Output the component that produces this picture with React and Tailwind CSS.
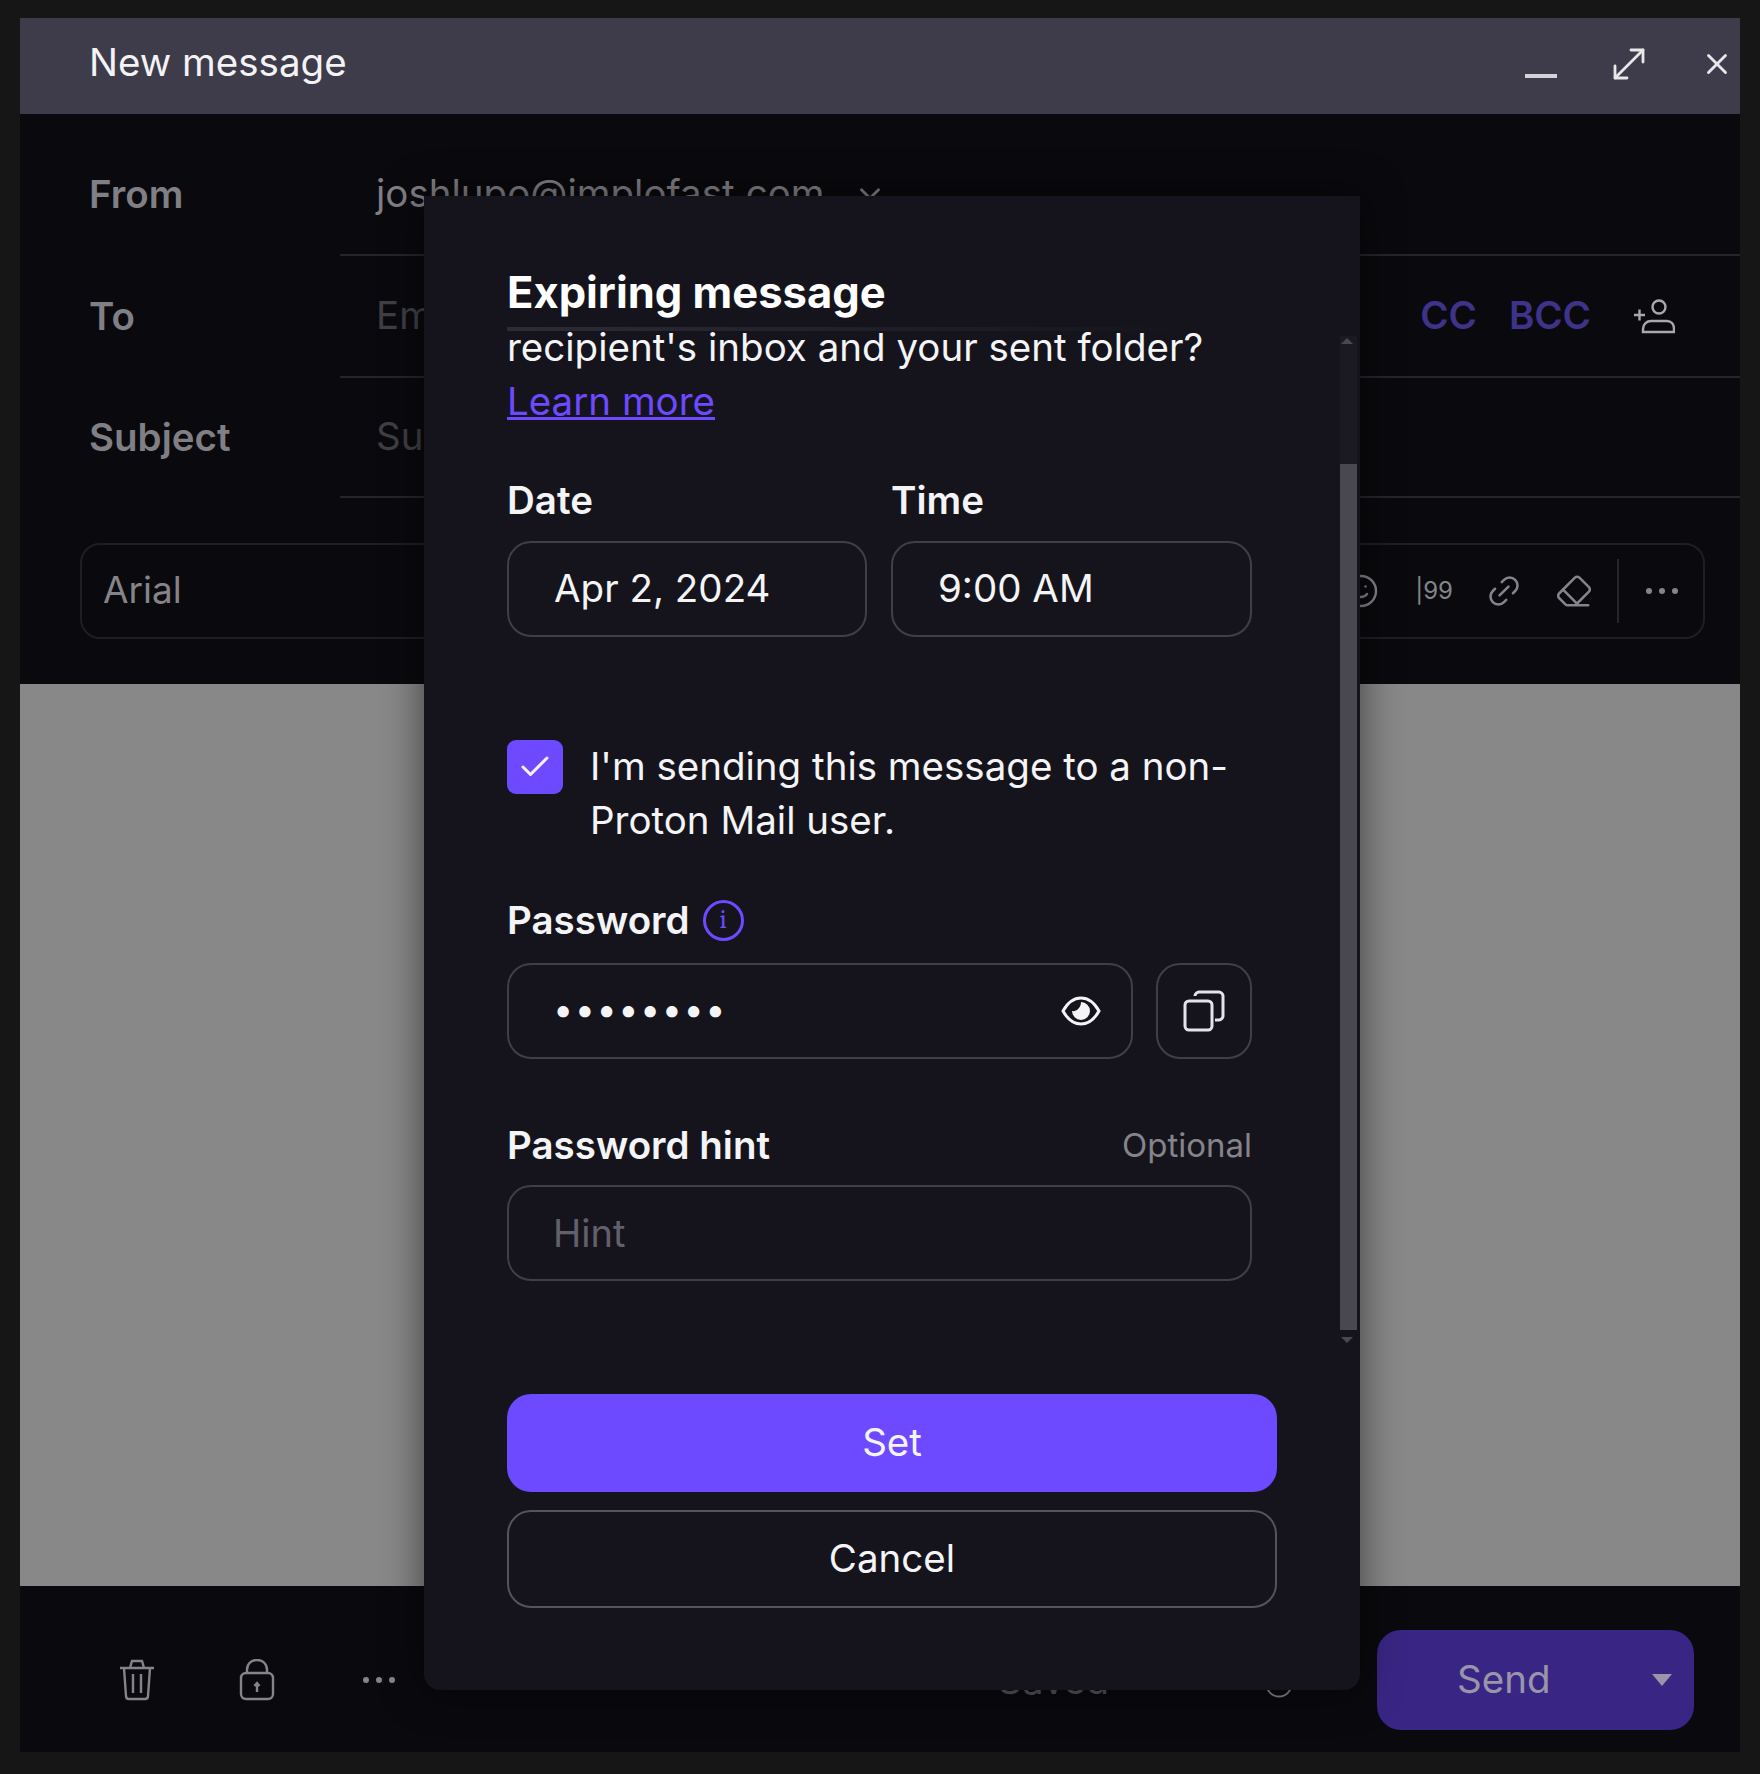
import React from 'react';
import { Check, X, MoveDiagonal, Smile, Link2, Eraser, ChevronDown, Clock } from 'lucide-react';

const inter = { fontFamily: 'Inter, sans-serif' };

function AddUser() {
    return (
        <svg width="42" height="35" viewBox="0 0 42 35" fill="none" stroke="#a9a8ad" strokeWidth="2.4">
            <circle cx="26" cy="8" r="6.500" />
            <path d="M10 33v-3c0-5 4-8 8-8h16c4 0 7 3 7 8v3z" />
            <path d="M1 16h11M6.500 10.500v11" />
        </svg>
    );
}

function Lock() {
    return (
        <svg width="36" height="42" viewBox="0 0 36 42" fill="none" stroke="#85848a" strokeWidth="2.400">
            <rect x="2" y="14" width="32" height="26" rx="5" />
            <path d="M8 14V11c0-6 4-10 10-10s10 4 10 10v3" />
            <path d="M18 33v-9M15.500 27l2.500-3 2.500 3" />
        </svg>
    );
}

function Trash() {
    return (
        <svg width="36" height="42" viewBox="0 0 36 42" fill="none" stroke="#85848a" strokeWidth="2.400">
            <path d="M1 9h34M11 9l2-7h10l2 7" />
            <path d="M5 9l2 28c0 2 1 3 3 3h16c2 0 3-1 3-3l2-28" />
            <path d="M14 15v19M22 15v19" />
        </svg>
    );
}

function Dots() {
    return (
        <svg width="34" height="8" viewBox="0 0 34 8" fill="currentColor">
            <circle cx="4" cy="4" r="3" />
            <circle cx="17" cy="4" r="3" />
            <circle cx="30" cy="4" r="3" />
        </svg>
    );
}

function EyeIcon() {
    return (
        <svg width="40" height="32" viewBox="0 0 40 32" fill="none" stroke="#f4f4f6" strokeWidth="3">
            <path d="M2 16C7 7 13 3 20 3s13 4 18 13c-5 9-11 13-18 13S7 25 2 16z" />
            <path d="M20 7a9 9 0 1 1-9 9c4 1 9-3 9-9z" fill="#f4f4f6" stroke="none" />
        </svg>
    );
}

function CopyIcon() {
    return (
        <svg width="42" height="42" viewBox="0 0 42 42" fill="none" stroke="#e4e4e8" strokeWidth="3">
            <rect x="2" y="11" width="27" height="29" rx="4" />
            <path d="M12 6c0-2 2-4 4-4h20c2 0 4 2 4 4v20c0 2-2 4-4 4h-4" />
        </svg>
    );
}

function FieldRow({ label, children, right, height = 'h-[122px]' }) {
    return (
        <div className={`flex items-center ${height}`}>
            <div className="w-[320px] pl-[69px] text-[38.5px] font-semibold text-[#807f85]">{label}</div>
            <div className="flex h-full flex-1 items-center justify-between border-b-2 border-[#26252c] pl-[36px] pr-[65px]">
                {children}
                {right}
            </div>
        </div>
    );
}

function Box({ className = '', children }) {
    return (
        <div className={`flex h-[96px] items-center rounded-[24px] border-2 border-[#403f49] ${className}`}>
            {children}
        </div>
    );
}

export default function App() {
    return (
        <div className="h-[1774px] w-[1760px] overflow-hidden bg-[#161616] px-[20px] pt-[18px]" style={inter}>
            <div className="relative flex h-[1734px] flex-col bg-[#0a0a0e]">
                {/* header */}
                <div className="flex h-[96px] items-center justify-between bg-[#3e3b4b] pl-[69px] pr-[6px] text-white">
                    <span className="-mt-[6px] text-[38.5px] text-[#f3f3f5]">New message</span>
                    <div className="-mt-[4px] flex items-center">
                        <div className="mt-[24px] h-[4px] w-[32px] bg-[#d4d3d8]" />
                        <MoveDiagonal size={48} strokeWidth={1.4} className="ml-[48px] text-[#e8e8ea]" />
                        <X size={34} strokeWidth={2} className="ml-[47px] text-[#e8e8ea]" />
                    </div>
                </div>

                {/* fields */}
                <div className="pt-[20px]">
                    <FieldRow label="From">
                        <div className="flex items-center text-[38.5px] text-[#807f85]">
                            joshlupo@implofast.com
                            <ChevronDown size={34} className="ml-[28px]" />
                        </div>
                    </FieldRow>
                    <FieldRow
                        label="To"
                        right={
                            <div className="flex items-center text-[38.5px] font-semibold text-[#3f3289]">
                                <span>CC</span>
                                <span className="ml-[32px]">BCC</span>
                                <span className="ml-[42px]"><AddUser /></span>
                            </div>
                        }
                    >
                        <span className="text-[38.5px] text-[#403f45]">Email address</span>
                    </FieldRow>
                    <FieldRow label="Subject" height="h-[120px]">
                        <span className="text-[38.5px] text-[#403f45]">Subject</span>
                    </FieldRow>
                </div>

                {/* toolbar */}
                <div className="ml-[60px] mr-[35px] mt-[45px] flex h-[96px] items-center justify-between rounded-[20px] border-2 border-[#1f1e25] pl-[21px] pr-[24px] text-[#85848a]">
                    <span className="-mt-[3px] text-[37px]">Arial</span>
                    <div className="flex items-center">
                        <Smile size={36} strokeWidth={1.6} />
                        <span className="ml-[36px] text-[24px]">|99</span>
                        <Link2 size={38} strokeWidth={1.6} className="ml-[32px] -rotate-45" />
                        <Eraser size={38} strokeWidth={1.6} className="ml-[32px]" />
                        <div className="ml-[24px] mr-[26px] h-[64px] w-[2px] bg-[#26252c]" />
                        <Dots />
                    </div>
                </div>

                {/* body */}
                <div className="mt-[45px] flex-1 bg-[#888888]" />

                {/* footer */}
                <div className="flex h-[166px] items-center justify-between pl-[99px] pr-[46px] pt-[22px] text-[#85848a]">
                    <div className="flex items-center">
                        <Trash />
                        <span className="ml-[84px]"><Lock /></span>
                        <span className="ml-[87px]"><Dots /></span>
                    </div>
                    <div className="flex items-center">
                        <span className="mr-[155px] text-[38px] text-[#55545c]">Saved</span>
                        <Clock size={30} strokeWidth={1.6} className="mr-[83px] mt-[8px]" />
                        <div className="flex h-[100px] w-[317px] items-center justify-between rounded-[24px] bg-[#392684] pl-[80px] pr-[22px] text-[38.5px] text-[#9a95a8]">
                            Send
                            <div className="h-0 w-0 border-x-[10px] border-t-[12px] border-x-transparent border-t-[#9a95a8]" />
                        </div>
                    </div>
                </div>

                {/* expiring message dialog */}
                <div className="absolute left-[404px] top-[178px] h-[1494px] w-[936px] rounded-b-[16px] bg-[#15141d] pl-[83px] pt-[68px] text-[#f4f4f6] shadow-[0_0_40px_rgba(0,0,0,0.55)]">
                    {/* shadow line under the sticky title */}
                    <div className="absolute left-[83px] top-[131px] h-[4px] w-[683px] bg-gradient-to-r from-[#2d2c36] to-transparent" />

                    <h1 className="relative text-[43.5px] font-bold leading-[56px] text-white">Expiring message</h1>
                    <p className="relative w-[790px] text-[38.5px] leading-[54px]">
                        recipient's inbox and your sent folder?
                        <br />
                        <a className="text-[#6d4aff] underline">Learn more</a>
                    </p>

                    <div className="mt-[45px] flex gap-[24px]">
                        <div className="w-[360px]">
                            <div className="text-[38.5px] font-semibold leading-[54px]">Date</div>
                            <Box className="mt-[14px] pl-[45px] text-[38.5px]">Apr 2, 2024</Box>
                        </div>
                        <div className="w-[361px]">
                            <div className="text-[38.5px] font-semibold leading-[54px]">Time</div>
                            <Box className="mt-[14px] pl-[45px] text-[38.5px]">9:00 AM</Box>
                        </div>
                    </div>

                    <div className="mt-[103px] flex w-[745px]">
                        <div className="flex h-[54px] w-[56px] shrink-0 items-center justify-center rounded-[9px] bg-[#6d4aff]">
                            <Check size={36} strokeWidth={2} />
                        </div>
                        <p className="ml-[27px] mt-[-1px] text-[38.5px] leading-[54px]">I'm sending this message to a non-Proton Mail user.</p>
                    </div>

                    <div className="mt-[46px] flex items-center text-[38.5px] font-semibold leading-[54px]">
                        Password
                        <span className="ml-[13px] flex h-[41px] w-[41px] items-center justify-center rounded-full border-[3px] border-[#6d4aff] font-serif text-[26px] font-normal text-[#6d4aff]">i</span>
                    </div>
                    <div className="mt-[16px] flex w-[745px] gap-[23px]">
                        <Box className="flex-1 justify-between pl-[44px] pr-[30px]">
                            <span className="-mt-[4px] text-[36px] tracking-[1.5px]">••••••••</span>
                            <EyeIcon />
                        </Box>
                        <Box className="w-[96px] shrink-0 justify-center">
                            <CopyIcon />
                        </Box>
                    </div>

                    <div className="mt-[59px] flex w-[745px] items-center justify-between leading-[54px]">
                        <span className="text-[38.5px] font-semibold">Password hint</span>
                        <span className="text-[33px] text-[#85848a]">Optional</span>
                    </div>
                    <Box className="mt-[13px] w-[745px] pl-[44px] text-[38px] text-[#62616b]">Hint</Box>

                    <div className="mt-[113px] flex h-[98px] w-[770px] items-center justify-center rounded-[24px] bg-[#6d4aff] text-[38.5px]">Set</div>
                    <div className="mt-[18px] flex h-[98px] w-[770px] items-center justify-center rounded-[24px] border-2 border-[#55545c] text-[38.5px]">Cancel</div>

                    {/* scrollbar */}
                    <div className="absolute right-[3px] top-[140px] h-[128px] w-[17px] bg-[#1b1a23]" />
                    <div className="absolute right-[3px] top-[268px] h-[866px] w-[17px] bg-[#494852]" />
                    <div className="absolute right-[7px] top-[142px] h-0 w-0 border-x-[6px] border-b-[6px] border-x-transparent border-b-[#494852]" />
                    <div className="absolute right-[7px] top-[1141px] h-0 w-0 border-x-[6px] border-t-[6px] border-x-transparent border-t-[#494852]" />
                </div>
            </div>
        </div>
    );
}
